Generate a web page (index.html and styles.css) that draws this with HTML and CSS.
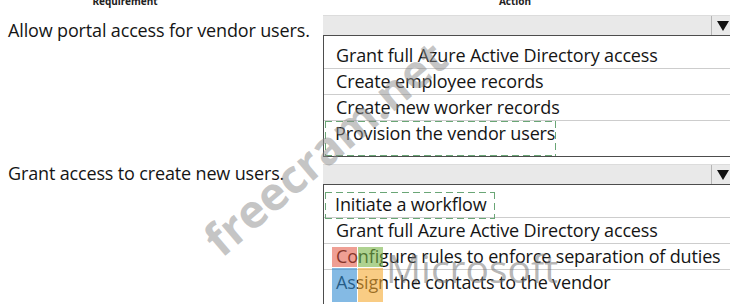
FILE: index.html
```html
<!DOCTYPE html>
<html>
<head>
<meta charset="utf-8">
<link rel="stylesheet" href="styles.css">
</head>
<body>
<div class="sheet">
  <div class="header">
    <div class="h-req">Requirement</div>
    <div class="h-act">Action</div>
  </div>

  <div class="row">
    <div class="label">Allow portal access for vendor users.</div>
    <div class="select">
      <div class="bar">
        <div class="bar-fill"></div>
        <div class="arrow"><svg width="12" height="10" viewBox="0 0 12 10"><polygon points="0,0 12,0 6,10" fill="#111"/></svg></div>
      </div>
      <div class="list list-a">
        <div class="opt">Grant full Azure Active Directory access</div>
        <div class="opt">Create employee records</div>
        <div class="opt">Create new worker records</div>
        <div class="opt last"><span class="dash dash-tall">Provision the vendor users</span></div>
      </div>
    </div>
  </div>

  <div class="row row-2">
    <div class="label label-2">Grant access to create new users.</div>
    <div class="select">
      <div class="bar">
        <div class="bar-fill"></div>
        <div class="arrow"><svg width="12" height="10" viewBox="0 0 12 10"><polygon points="0,0 12,0 6,10" fill="#111"/></svg></div>
      </div>
      <div class="list list-b">
        <div class="opt"><span class="dash dash-wide">Initiate a workflow</span></div>
        <div class="opt">Grant full Azure Active Directory access</div>
        <div class="opt">Configure rules to enforce separation of duties</div>
        <div class="opt last">Assign the contacts to the vendor</div>
      </div>
    </div>
  </div>
</div>

<div class="wm-free">freecram.net</div>
<div class="wm-logo">
  <span class="sq sq-r"></span><span class="sq sq-g"></span>
  <span class="sq sq-b"></span><span class="sq sq-y"></span>
</div>
<div class="wm-ms">Microsoft</div>
</body>
</html>
```

FILE: styles.css
```css
html, body {
  margin: 0;
  padding: 0;
  background: #ffffff;
}
body {
  width: 730px;
  height: 304px;
  overflow: hidden;
  position: relative;
  font-family: "Open Sans", "Noto Sans", sans-serif;
  color: #151515;
}
.sheet {
  padding-left: 8px;
}
.header {
  display: flex;
  height: 8px;
  font-family: "Noto Sans", sans-serif;
  font-weight: 700;
  font-size: 10px;
  line-height: 8px;
  color: #222;
  overflow: hidden;
}
.h-req {
  width: 234px;
  text-align: center;
  margin-top: -3px;
}
.h-act {
  margin-left: 81px;
  width: 384px;
  text-align: center;
  margin-top: -3px;
}
.row {
  display: grid;
  grid-template-columns: 315px 1fr;
  margin-top: 7px;
}
.label {
  font-size: 18px;
  line-height: 24px;
  padding-top: 3px;
  letter-spacing: -0.15px;
}
.label-2 {
  padding-top: 0;
  margin-top: -3px;
}
.select {
  margin-right: -20px;
}
.bar {
  display: flex;
  height: 20px;
  background: #e9e9e9;
  border-top: 1px solid #dcdcdc;
  box-sizing: border-box;
}
.bar-fill {
  width: 388px;
}
.arrow {
  border-left: 1px solid #b5b5b5;
  display: flex;
  align-items: center;
  padding-left: 5px;
  width: 40px;
}
.list {
  border: 1px solid #4d4d4d;
  border-right: none;
  padding: 7px 0 9px;
  font-size: 18px;
  letter-spacing: -0.15px;
}
.list-b {
  padding-bottom: 20px;
}
.opt {
  height: 26px;
  line-height: 25px;
  padding-left: 12px;
  border-bottom: 1px solid #cdcdcd;
  box-sizing: border-box;
  white-space: nowrap;
}
.opt.last {
  border-bottom: none;
}
.dash {
  display: inline-block;
  margin-left: -11px;
  padding: 0 1px 0 10px;
  height: 27px;
  margin-top: -1px;
  box-sizing: border-box;
  background:
    linear-gradient(to right, #6aa676 60%, transparent 60%) left top / 11px 1px repeat-x,
    linear-gradient(to right, #6aa676 60%, transparent 60%) left bottom / 11px 1px repeat-x,
    linear-gradient(to bottom, #6aa676 60%, transparent 60%) left top / 1px 11px repeat-y,
    linear-gradient(to bottom, #6aa676 60%, transparent 60%) right top / 1px 11px repeat-y;
}
.dash-tall {
  height: 35px;
}
.dash-wide {
  padding-right: 8px;
}

.wm-free {
  position: absolute;
  left: 210px;
  top: 220px;
  height: 50px;
  font-family: "Open Sans", sans-serif;
  font-weight: 700;
  font-size: 46px;
  line-height: 50px;
  color: rgba(140, 140, 140, 0.5);
  transform: rotate(-40.5deg);
  transform-origin: left center;
  white-space: nowrap;
  pointer-events: none;
}
.wm-logo {
  position: absolute;
  left: 332px;
  top: 247px;
  width: 52px;
  display: grid;
  grid-template-columns: 25px 25px;
  grid-template-rows: 20px 34px;
  gap: 1px;
}
.sq-r { background: rgba(226, 80, 60, 0.55); }
.sq-g { background: rgba(120, 180, 70, 0.6); }
.sq-b { background: rgba(50, 140, 210, 0.6); }
.sq-y { background: rgba(245, 170, 50, 0.6); }
.wm-ms {
  position: absolute;
  left: 386px;
  top: 243px;
  font-family: "Open Sans", sans-serif;
  font-size: 39px;
  line-height: 50px;
  color: rgba(120, 120, 120, 0.55);
  letter-spacing: 0;
  white-space: nowrap;
}
```
